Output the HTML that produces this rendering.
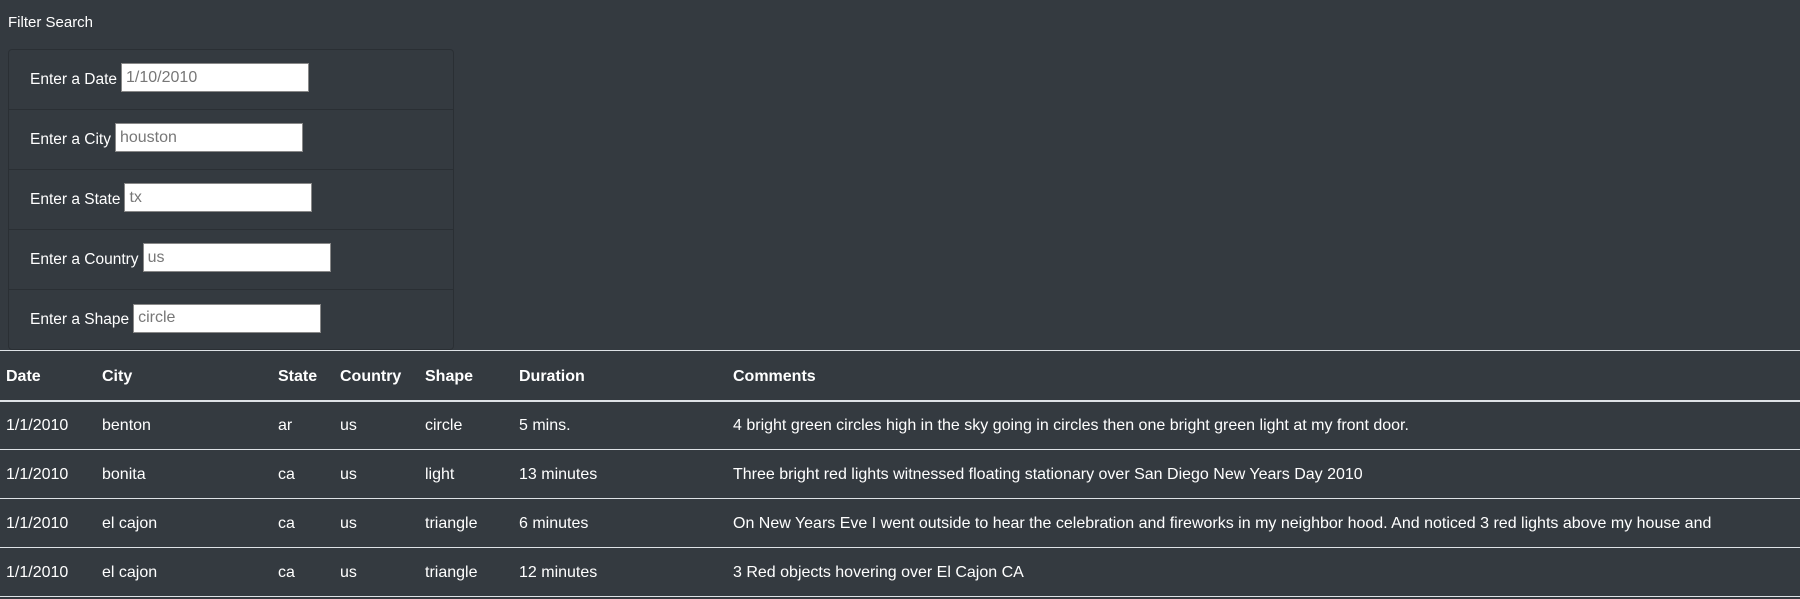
<!DOCTYPE html>
<html><head><meta charset="utf-8"><style>
*{box-sizing:border-box;margin:0;padding:0}
html,body{width:1800px;height:599px;overflow:hidden;background:#343a40;color:#fff;font-family:"Liberation Sans",sans-serif;font-size:16px}
.title{position:absolute;left:8px;top:14px;font-size:15px}
.panel{position:absolute;left:8px;top:49px;width:446px;height:301px;border:1px solid rgba(0,0,0,.18);border-radius:4px}
.row{height:60px;border-bottom:1px solid rgba(0,0,0,.18);display:flex;align-items:center;padding-left:21px;font-size:15.5px}
.row:last-child{border-bottom:none}
.row input{margin-left:4px;width:188px;height:29px;border:1px solid #888;background:#fff;font-family:"Liberation Sans",sans-serif;font-size:16px;color:#777;padding:0 4px;position:relative;top:-2px}
table{position:absolute;left:0;top:350px;width:1800px;border-collapse:collapse;border-top:1px solid #dee2e6}
td,th{text-align:left;padding:2px 0 0 6px;height:49px;border-bottom:1px solid #dee2e6;font-size:16px;white-space:nowrap}
th{font-weight:bold;border-bottom:2px solid #dee2e6;height:50px;padding-top:3px}
</style></head><body>
<div class="title">Filter Search</div>
<div class="panel">
<div class="row">Enter a Date<input value="1/10/2010"></div>
<div class="row">Enter a City<input value="houston"></div>
<div class="row">Enter a State<input value="tx"></div>
<div class="row">Enter a Country<input value="us"></div>
<div class="row">Enter a Shape<input value="circle"></div>
</div>
<table>
<colgroup><col style="width:96px"><col style="width:176px"><col style="width:62px"><col style="width:85px"><col style="width:94px"><col style="width:214px"><col></colgroup>
<tr><th>Date</th><th>City</th><th>State</th><th>Country</th><th>Shape</th><th>Duration</th><th>Comments</th></tr>
<tr><td>1/1/2010</td><td>benton</td><td>ar</td><td>us</td><td>circle</td><td>5 mins.</td><td>4 bright green circles high in the sky going in circles then one bright green light at my front door.</td></tr>
<tr><td>1/1/2010</td><td>bonita</td><td>ca</td><td>us</td><td>light</td><td>13 minutes</td><td>Three bright red lights witnessed floating stationary over San Diego New Years Day 2010</td></tr>
<tr><td>1/1/2010</td><td>el cajon</td><td>ca</td><td>us</td><td>triangle</td><td>6 minutes</td><td>On New Years Eve I went outside to hear the celebration and fireworks in my neighbor hood. And noticed 3 red lights above my house and</td></tr>
<tr><td>1/1/2010</td><td>el cajon</td><td>ca</td><td>us</td><td>triangle</td><td>12 minutes</td><td>3 Red objects hovering over El Cajon CA</td></tr>
</table>
</body></html>
